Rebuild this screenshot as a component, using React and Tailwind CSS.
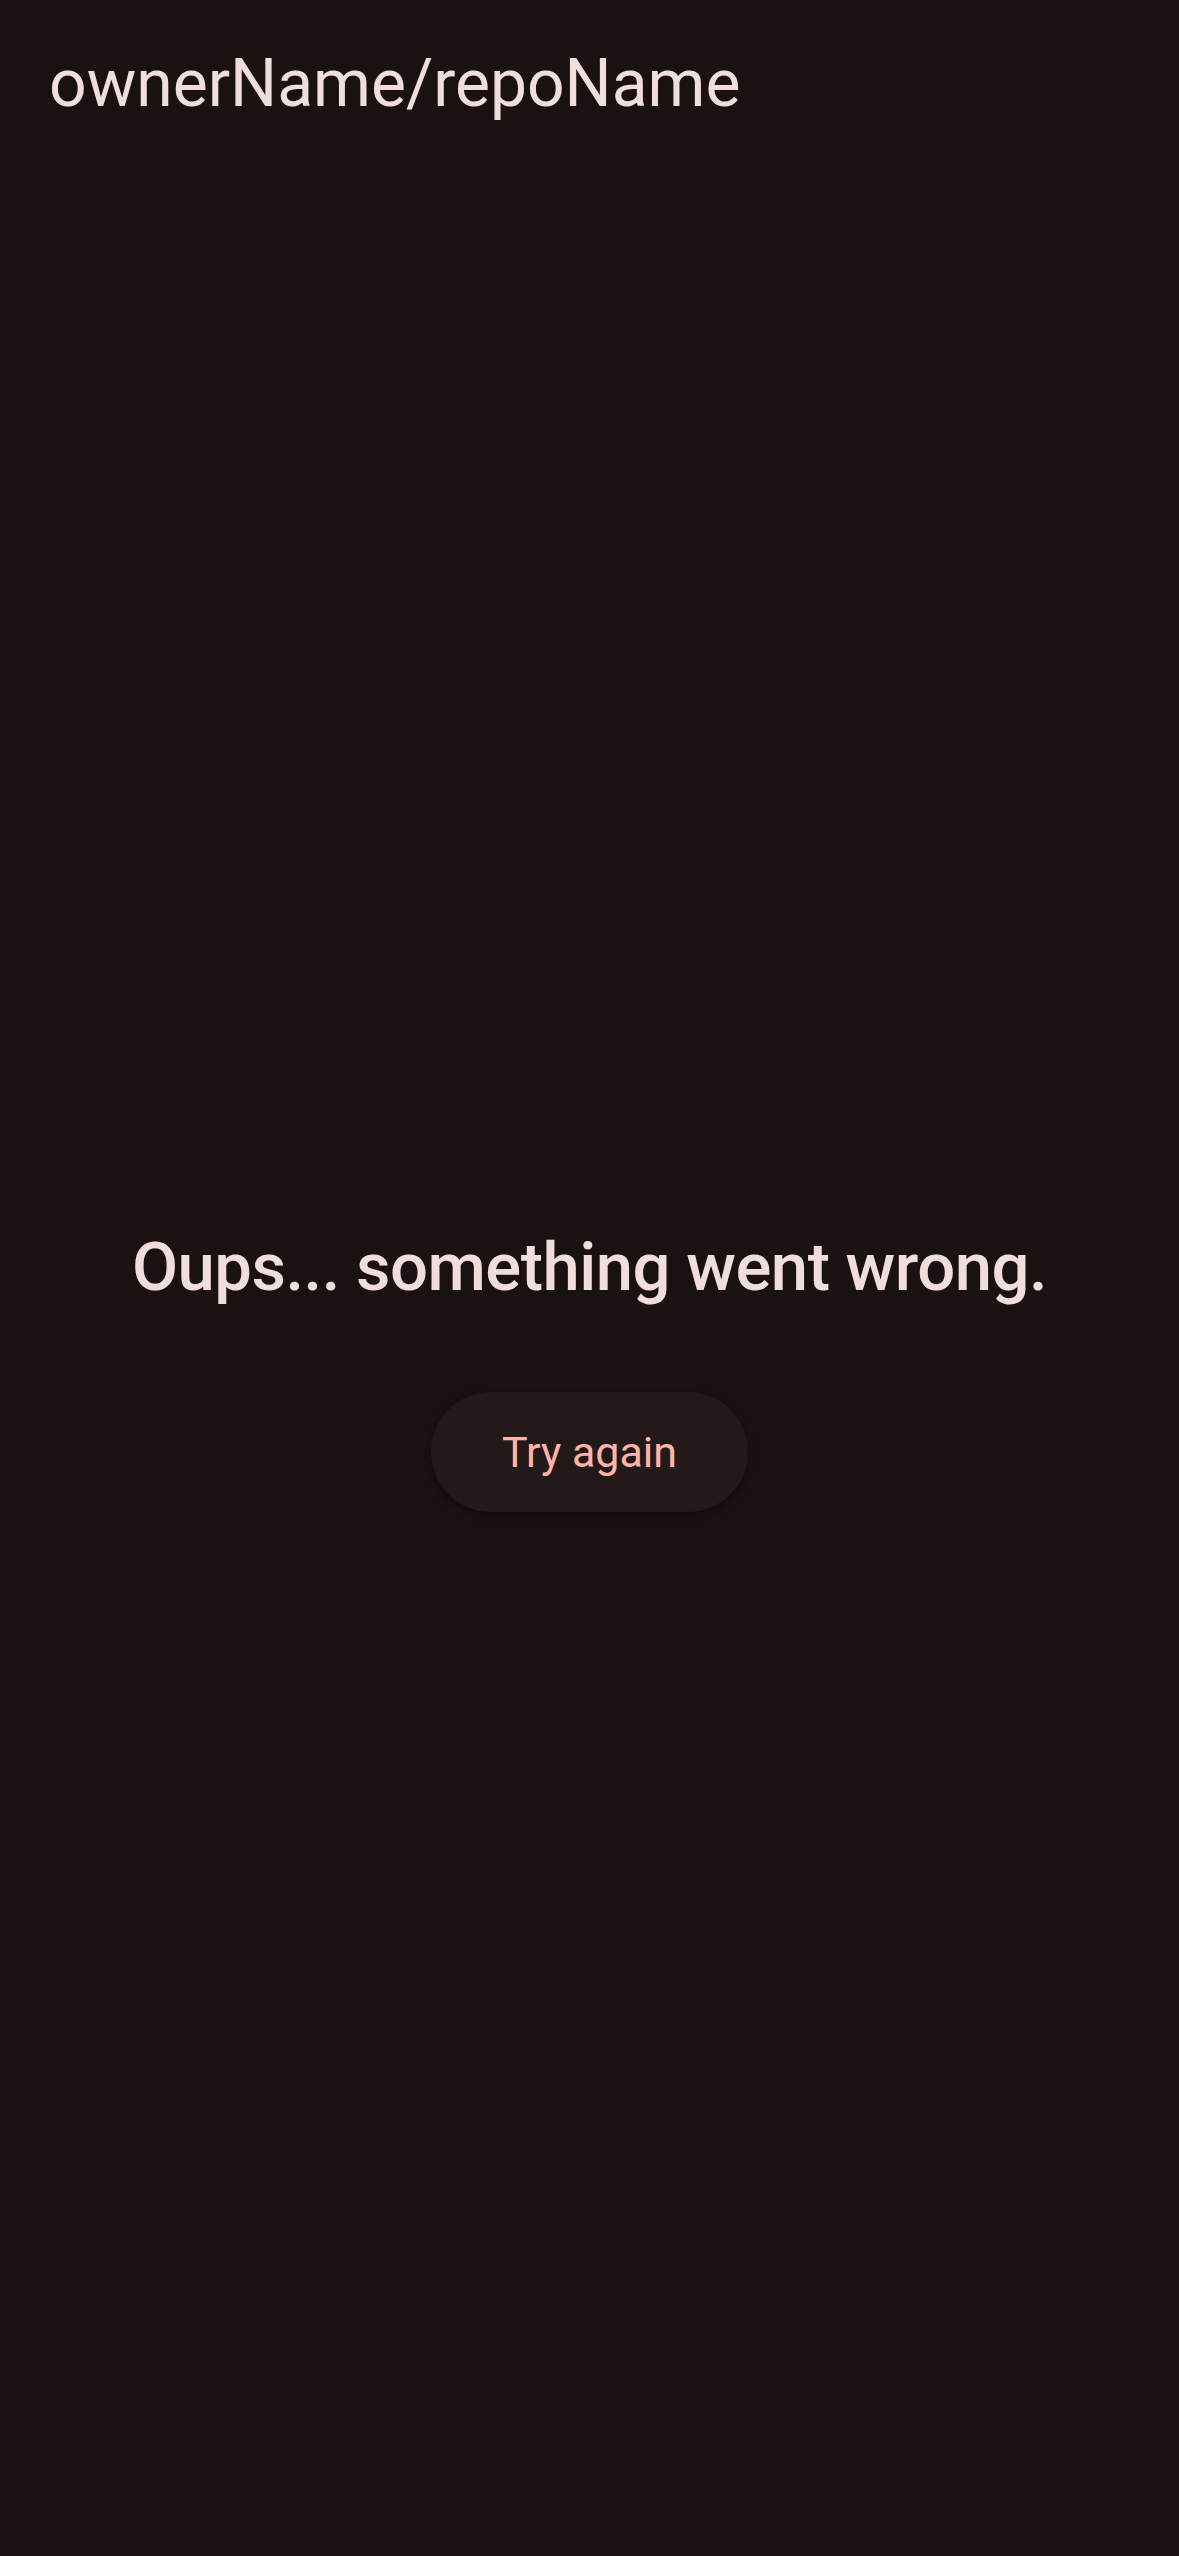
import React from "react";

export default function App() {
  return (
    <div
      className="min-h-[2556px] w-full bg-[#1a1111] flex flex-col"
      style={{ fontFamily: "Roboto, 'Noto Sans', sans-serif" }}
    >
      <header className="h-[183px] px-[49px] pt-[44px] shrink-0">
        <h1 className="text-[66px] leading-[1.2] font-normal text-[#f1dedc]">
          ownerName/repoName
        </h1>
      </header>
      <main className="flex-1 flex flex-col items-center justify-center gap-[85px]">
        <h2 className="text-[67px] leading-[1.2] font-medium tracking-[-0.5px] text-[#f1dedc] text-center">
          Oups... something went wrong.
        </h2>
        <button
          type="button"
          className="h-[120px] px-[71px] rounded-full bg-[#231919] text-[#ffb4a9] text-[43px] font-normal shadow-[0_3px_6px_rgba(0,0,0,0.3)]"
        >
          Try again
        </button>
      </main>
    </div>
  );
}
